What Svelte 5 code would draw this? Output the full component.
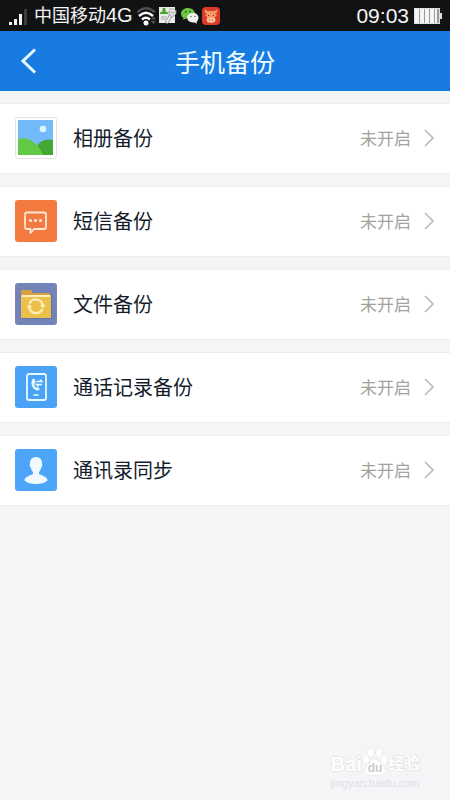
<script lang="ts">
  type Item = { id: string; label: string; status: string };

  const items: Item[] = [
    { id: "album", label: "相册备份", status: "未开启" },
    { id: "sms", label: "短信备份", status: "未开启" },
    { id: "files", label: "文件备份", status: "未开启" },
    { id: "calls", label: "通话记录备份", status: "未开启" },
    { id: "contacts", label: "通讯录同步", status: "未开启" },
  ];
</script>

<div class="screen">
  <div class="statusbar">
    <svg class="signal" width="20" height="20" viewBox="0 0 20 20" aria-hidden="true">
      <path d="M1 16h3v3H1zM6 13h3v6H6zM11 8h3v11h-3z" fill="#f4f4f4" />
      <path d="M16 3h3v16h-3z" fill="#3c3c3c" />
    </svg>
    <span class="carrier">中国移动<span class="net">4G</span></span>
    <svg width="21" height="20" viewBox="0 0 21 20" aria-hidden="true">
      <g fill="none" stroke-width="2.4">
        <path d="M0 6.500Q9 -2 18 6.500" stroke="#505050" />
        <path d="M2 10Q9 3.500 16 10M5 13.500Q9 10 13 13.500" stroke="#fff" />
      </g>
      <circle cx="9" cy="17" r="2.500" fill="#fff" />
      <path d="M14 13.500l2.500-3 2.500 3zM14 15l2.500 3 2.500-3z" fill="#555" />
    </svg>
    <svg width="21" height="20" viewBox="0 0 21 20" aria-hidden="true">
      <path d="M1 1h16v16H1z" fill="#e8ebe7" />
      <path d="M2 8V6.500l2.500-1V2h3v3.500l2.500 1V8z" fill="#48a52f" />
      <path d="M11 3h5M3 11h6M3 13h5" stroke="#a7aaa5" />
      <path d="M9 16l4-7" stroke="#858786" stroke-width="3.500" stroke-linecap="round" />
      <path d="M9 16l4-7" stroke="#f0f0f0" stroke-width="2" stroke-linecap="round" />
      <path d="M11 5v4l3 2 4-3V4l-3 3z" fill="#ddd" stroke="#8f8f8f" stroke-width=".7" />
    </svg>
    <svg class="wechat" width="18" height="18" viewBox="0 0 18 18" aria-hidden="true">
      <path d="M7 1c-4 0-7 2.500-7 5.500 0 2 1 3.500 2.500 4.500L2 13l3-1.500h2C11 11.500 14 9 14 6.500S11 1 7 1z" fill="#6cc644" />
      <path d="M12 6c-3.300 0-5.800 2-5.800 4.700s2.500 4.700 5.800 4.700h1.500l2.500 1.400-.5-2c1.300-.9 2-2.500 2-4.100C17.500 8 15 6 12 6z" fill="#f0f4ed" />
      <g fill="#26782a"><circle cx="4.700" cy="4.700" r="1" /><circle cx="9" cy="4.700" r="1" /></g>
      <g fill="#777"><circle cx="10" cy="9.500" r=".8" /><circle cx="14" cy="9.500" r=".8" /></g>
    </svg>
    <svg width="18" height="18" viewBox="0 0 18 18" aria-hidden="true">
      <rect width="18" height="18" rx="4" fill="#d93a2c" />
      <path d="M3 2c-1 3 0 4 2 4.500L3 8l2 2v4l2 2h4l2-2v-4l2-2-2-1.500C15 6 16 5 15 2c-1 2-2 2-4 2H7C5 4 4 4 3 2z" fill="#f59a62" />
      <ellipse cx="9" cy="13" rx="4.500" ry="2.500" fill="#ffc59a" />
      <path d="M6 8.500h1M11 8.500h1M7 13h1M10 13h1" stroke="#762719" stroke-width="1.200" />
    </svg>
    <time class="clock">09:03</time>
    <svg width="28" height="16" viewBox="0 0 28 16" aria-hidden="true">
      <rect x=".5" y=".5" width="25" height="15" fill="#999" stroke="#ddd" />
      <path d="M1 1h4v14H1zM6 1h4v14H6zM11 1h4v14h-4zM16 1h4v14h-4zM21 1h2v14h-2z" fill="#f5f5f5" />
      <path d="M26 5h2v6h-2z" fill="#ddd" />
    </svg>
  </div>

  <header>
    <button class="back" aria-label="返回">
      <svg width="16" height="26" viewBox="0 0 16 26" aria-hidden="true">
        <path d="M15 1.500L3 13 15 24.500" fill="none" stroke="#e9fbff" stroke-width="3" />
      </svg>
    </button>
    <h1>手机备份</h1>
  </header>

  <main>
    {#each items as item (item.id)}
      <button class="row">
        <svg class="icon" width="42" height="42" viewBox="0 0 42 42" aria-hidden="true">
          {#if item.id === "album"}
            <rect x=".5" y=".5" width="41" height="41" rx="2" fill="#fff" stroke="#e2e4e2" />
            <path d="M3 3h35v35H3z" fill="#72bafa" />
            <path d="M23 27q7-6 15-4v15H23z" fill="#43a832" />
            <path d="M3 22c10-3 20 4 25 16H3z" fill="#61c944" />
            <circle cx="28" cy="12" r="3.300" fill="#def3ff" />
          {:else if item.id === "sms"}
            <rect width="42" height="42" rx="3" fill="#f47b40" />
            <path d="M12 12.500h17q2 0 2 2V27q0 2-2 2H19l-3.500 4v-4H12q-2 0-2-2V14.500q0-2 2-2z" fill="none" stroke="#ffe5d5" stroke-width="1.800" stroke-linejoin="round" />
            <g fill="#fff0e5"><circle cx="15.500" cy="20.500" r="1.500" /><circle cx="20.500" cy="20.500" r="1.500" /><circle cx="25.500" cy="20.500" r="1.500" /></g>
          {:else if item.id === "files"}
            <rect width="42" height="42" rx="3" fill="#7284b7" />
            <path d="M7 11h30v25H7z" fill="#66749f" />
            <path d="M6 8q0-1 1-1h9l2 3h17v5H6z" fill="#d9a043" />
            <path d="M6 12h30v23H6z" fill="#ecc04c" />
            <path d="M7 12h28v2H7z" fill="#fff0bb" />
            <path d="M14.500 20.500a7 7 0 0 1 13.300 2M27.500 26a7 7 0 0 1-13.300-2" fill="none" stroke="#fff0b7" stroke-width="2.200" />
            <path d="M25 22h5.500l-2.700 3.500zM11.500 24.500l2.700-3.500 2.800 3.500z" fill="#fff0b7" />
          {:else if item.id === "calls"}
            <rect width="42" height="42" rx="3" fill="#4aa2f6" />
            <rect x="12" y="8" width="19" height="26" rx="2" fill="none" stroke="#e6faff" stroke-width="1.800" />
            <path d="M18.500 12.500c-4 2-2 11.500 4 12 1.500 0 2.500-1 2-2L22.500 21l-1.200.7c-1.300-1-2-2.500-2-4l1.200-.7-.5-3.500z" fill="#e6faff" />
            <path d="M21.500 15.500H27l-2-2M27 18.500h-5.500l2 2M18.500 29h5" fill="none" stroke="#e6faff" stroke-width="1.500" />
          {:else}
            <rect width="42" height="42" rx="3" fill="#4ca5f8" />
            <path d="M21 8c-4 0-6.500 3-6 7-.8 1-.2 3 .8 3.500.5 2 1.200 3.500 2.200 4.500v2c-4 2-8.500 3-8.500 6.500C12 34 16 35 21 35s9-1 11.500-3.500C32.500 28 28 27 24 25v-2c1-1 1.700-2.500 2.200-4.500 1-.5 1.600-2.500.8-3.500.5-4-2-7-6-7z" fill="#f0f9ff" />
          {/if}
        </svg>
        <span class="label">{item.label}</span>
        <span class="state">{item.status}</span>
        <svg width="12" height="20" viewBox="0 0 12 20" aria-hidden="true">
          <path d="M2 2l8 8-8 8" fill="none" stroke="#bcbcbc" stroke-width="1.700" />
        </svg>
      </button>
    {/each}
  </main>

  <footer>
    <div class="brand">
      <span>Bai</span>
      <svg width="26" height="28" viewBox="0 0 26 28" aria-hidden="true">
        <g fill="#fff" stroke="#dcdfe2">
          <ellipse cx="4" cy="12" rx="3" ry="4" />
          <ellipse cx="9" cy="5" rx="3" ry="4" />
          <ellipse cx="17" cy="5" rx="3" ry="4" />
          <ellipse cx="22" cy="12" rx="3" ry="4" />
          <path d="M13 11c-3 0-4 3-6 5s-5 4-4 8c1 3 5 3 10 3s9 0 10-3c1-4-2-6-4-8s-3-5-6-5z" />
        </g>
        <text x="13" y="24" text-anchor="middle">du</text>
      </svg>
      <span class="cn">经验</span>
    </div>
    <div class="site">jingyan.baidu.com</div>
  </footer>
</div>

<style>
  :global(body) {
    margin: 0;
    background: #f4f5f7;
  }

  .screen {
    min-height: 100vh;
    display: flex;
    flex-direction: column;
    font-family: "Liberation Sans", "Noto Sans CJK SC", sans-serif;
    background: #f4f5f7;
  }

  .statusbar {
    box-sizing: border-box;
    height: 31px;
    padding: 0 8px;
    display: flex;
    align-items: center;
    background: #111214;
    color: #f5f5f5;
  }

  .signal {
    margin-right: 6px;
  }

  .carrier {
    font-size: 18px;
    line-height: 30px;
    margin-right: 4px;
  }

  .net {
    font-size: 20px;
  }

  .wechat {
    margin: 0 3px 0 2px;
  }

  .clock {
    font-size: 21px;
    margin-left: auto;
    margin-right: 5px;
  }

  header {
    height: 60px;
    display: grid;
    grid-template-columns: 60px 1fr 60px;
    align-items: center;
    background: #187be1;
    color: #effdff;
  }

  button {
    border: 0;
    padding: 0;
    background: none;
    font: inherit;
    cursor: pointer;
  }

  .back {
    height: 60px;
    padding-left: 20px;
    display: flex;
    align-items: center;
  }

  h1 {
    margin: 0;
    text-align: center;
    font-size: 25px;
    font-weight: 400;
  }

  main {
    display: flex;
    flex-direction: column;
    gap: 12px;
    padding-top: 12px;
  }

  .row {
    box-sizing: border-box;
    width: 100%;
    height: 71px;
    padding: 0 15px 2px;
    display: flex;
    align-items: center;
    background: #fff;
    border-top: 1px solid #eceded;
    border-bottom: 1px solid #eceded;
  }

  .icon {
    margin-right: 16px;
  }

  .label {
    flex: 1;
    text-align: left;
    font-size: 20px;
    color: #141d2c;
  }

  .state {
    font-size: 17px;
    color: #a2a2a2;
    margin-right: 12px;
  }

  footer {
    margin-top: auto;
    align-self: flex-end;
    padding: 0 30px 10px 0;
  }

  .brand {
    display: flex;
    align-items: flex-end;
    color: #fff;
    font-size: 20px;
    line-height: 24px;
    font-weight: 700;
    -webkit-text-stroke: 1px #dcdfe2;
    paint-order: stroke fill;
  }

  .brand text {
    font-size: 12px;
    fill: #c9ccd0;
    stroke: none;
    -webkit-text-stroke: 0;
  }

  .cn {
    font-size: 16px;
  }

  .site {
    font-size: 11px;
    line-height: 14px;
    color: #dfe1e4;
  }
</style>
